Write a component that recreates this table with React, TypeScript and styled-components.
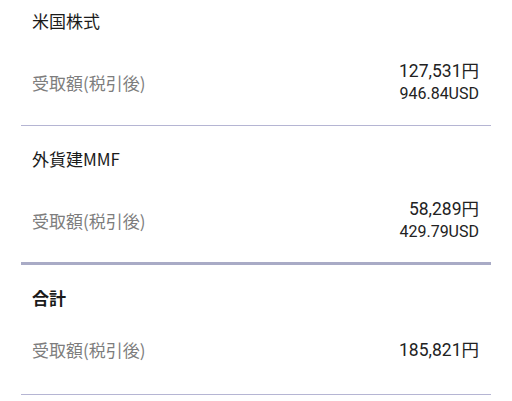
import React from 'react';
import styled, { createGlobalStyle } from 'styled-components';

const GlobalStyle = createGlobalStyle`
  html, body {
    margin: 0;
    padding: 0;
    background: #ffffff;
  }
  body {
    font-family: "Noto Sans CJK JP", "Noto Sans", sans-serif;
    -webkit-font-smoothing: antialiased;
  }
`;

const Page = styled.div`
  width: 512px;
  padding: 0 21px;
  box-sizing: border-box;
`;

const Section = styled.section<{ $top: number; $bottom: number; $thick?: boolean }>`
  padding: ${(p) => p.$top}px 12px ${(p) => p.$bottom}px 11px;
  border-bottom: ${(p) => (p.$thick ? '3px solid #a9abc6' : '1px solid #b5b5d3')};
`;

const Title = styled.div<{ $bold?: boolean }>`
  font-size: 17px;
  line-height: 24px;
  color: #1b1b1b;
  font-weight: ${(p) => (p.$bold ? 700 : 400)};
`;

const Row = styled.div<{ $gap: number }>`
  margin-top: ${(p) => p.$gap}px;
  display: flex;
  align-items: center;
  justify-content: space-between;
  min-height: 46px;
`;

const Label = styled.div`
  font-size: 17px;
  line-height: 22px;
  color: #7d7d7d;
`;

const Amounts = styled.div`
  display: flex;
  flex-direction: column;
  align-items: flex-end;
`;

const Yen = styled.div`
  font-family: "Roboto", "Noto Sans CJK JP", sans-serif;
  font-size: 17.5px;
  line-height: 22px;
  color: #222222;
`;

const Usd = styled.div`
  font-family: "Roboto", "Noto Sans CJK JP", sans-serif;
  font-size: 16px;
  line-height: 24px;
  color: #222222;
`;

type Item = {
  title: string;
  yen: string;
  usd?: string;
  bold?: boolean;
  top: number;
  gap: number;
  bottom: number;
  thick?: boolean;
};

const items: Item[] = [
  { title: '米国株式', yen: '127,531円', usd: '946.84USD', top: 9, gap: 27, bottom: 19 },
  { title: '外貨建MMF', yen: '58,289円', usd: '429.79USD', top: 21, gap: 27, bottom: 18, thick: true },
  { title: '合計', yen: '185,821円', bold: true, top: 21, gap: 17, bottom: 21 },
];

export default function App() {
  return (
    <>
      <GlobalStyle />
      <Page>
        {items.map((it) => (
          <Section key={it.title} $top={it.top} $bottom={it.bottom} $thick={it.thick}>
            <Title $bold={it.bold}>{it.title}</Title>
            <Row $gap={it.gap}>
              <Label>受取額(税引後)</Label>
              <Amounts>
                <Yen>{it.yen}</Yen>
                {it.usd && <Usd>{it.usd}</Usd>}
              </Amounts>
            </Row>
          </Section>
        ))}
      </Page>
    </>
  );
}
